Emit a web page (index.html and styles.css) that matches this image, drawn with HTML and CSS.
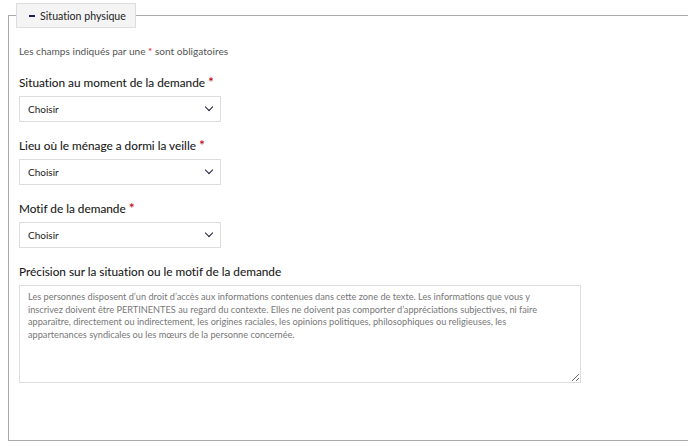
FILE: index.html
```html
<!DOCTYPE html>
<html lang="fr">
<head>
    <meta charset="UTF-8">
    <meta name="viewport" content="width=device-width, initial-scale=1.0">
    <title>Situation physique</title>
    <link rel="stylesheet" href="styles.css">
</head>
<body>
    <fieldset class="bloc">
        <legend class="bloc-title"><span class="toggle"></span>Situation physique</legend>

        <p class="required-note">Les champs indiqués par une <span class="star">*</span> sont obligatoires</p>

        <div class="form-group">
            <label class="control-label" for="sel-situation">Situation au moment de la demande <span class="star">*</span></label>
            <div class="select-wrap">
                <select id="sel-situation" class="form-control">
                    <option>Choisir</option>
                </select>
            </div>
        </div>

        <div class="form-group">
            <label class="control-label" for="sel-lieu">Lieu où le ménage a dormi la veille <span class="star">*</span></label>
            <div class="select-wrap">
                <select id="sel-lieu" class="form-control">
                    <option>Choisir</option>
                </select>
            </div>
        </div>

        <div class="form-group">
            <label class="control-label" for="sel-motif">Motif de la demande <span class="star">*</span></label>
            <div class="select-wrap">
                <select id="sel-motif" class="form-control">
                    <option>Choisir</option>
                </select>
            </div>
        </div>

        <div class="form-group form-group-text">
            <label class="control-label" for="txt-precision">Précision sur la situation ou le motif de la demande</label>
            <textarea id="txt-precision" class="form-area" placeholder="Les personnes disposent d’un droit d’accès aux informations contenues dans cette zone de texte. Les informations que vous y&#10;inscrivez doivent être PERTINENTES au regard du contexte. Elles ne doivent pas comporter d’appréciations subjectives, ni faire&#10;apparaître, directement ou indirectement, les origines raciales, les opinions politiques, philosophiques ou religieuses, les&#10;appartenances syndicales ou les mœurs de la personne concernée."></textarea>
        </div>
    </fieldset>
</body>
</html>
```

FILE: styles.css
```css
* {
    box-sizing: border-box;
}

html, body {
    margin: 0;
    padding: 0;
    overflow: hidden;
    background: #fff;
}

body {
    font-family: Lato, "Open Sans", sans-serif;
    font-variant-ligatures: none;
    color: #1e1e1e;
}

.bloc {
    margin: 3px 0 0 8px;
    width: 720px;
    min-height: 438px;
    padding: 8px 10px 0 10px;
    border: 1px solid #aaa;
}

.bloc-title {
    margin-left: -3px;
    width: 120px;
    height: 25px;
    padding: 0 0 0 3px;
    display: flex;
    align-items: center;
    justify-content: center;
    gap: 4px;
    font-size: 10.6px;
    color: #222;
    background: #f4f4f4;
    border: 1px solid #ddd;
}

.toggle {
    display: inline-block;
    width: 6px;
    height: 2px;
    background: #1e1e50;
    margin-right: 1px;
}

.required-note {
    margin: 9px 0 16px;
    font-size: 10.1px;
    color: #555;
}

.star {
    color: #e1000f;
}

.control-label .star {
    font-size: 14px;
}

.form-group {
    margin-bottom: 14px;
}

.form-group-text {
    margin-top: 15px;
}

.control-label {
    display: block;
    font-size: 11.8px;
    line-height: 18px;
    margin-bottom: 4px;
    color: #161616;
    -webkit-text-stroke: 0.08px #161616;
}

.select-wrap {
    position: relative;
    width: 202px;
}

.select-wrap::after {
    content: "";
    position: absolute;
    right: 9px;
    top: 8px;
    width: 5px;
    height: 5px;
    border-right: 1.7px solid #1e1e3c;
    border-bottom: 1.7px solid #1e1e3c;
    transform: rotate(45deg);
    pointer-events: none;
}

.form-control {
    display: block;
    width: 100%;
    height: 26px;
    padding: 0 8px;
    font-family: inherit;
    font-size: 10px;
    color: #222;
    background: #fff;
    border: 1px solid #ddd;
    border-radius: 0;
    appearance: none;
    -webkit-appearance: none;
}

.form-area {
    display: block;
    width: 562px;
    height: 98px;
    margin-top: 1px;
    padding: 5px 8px;
    font-family: inherit;
    font-size: 9.2px;
    line-height: 12.6px;
    color: #555;
    border: 1px solid #ddd;
    border-radius: 0;
    resize: both;
    white-space: pre-wrap;
}

.form-area::placeholder {
    color: #777;
}
```
